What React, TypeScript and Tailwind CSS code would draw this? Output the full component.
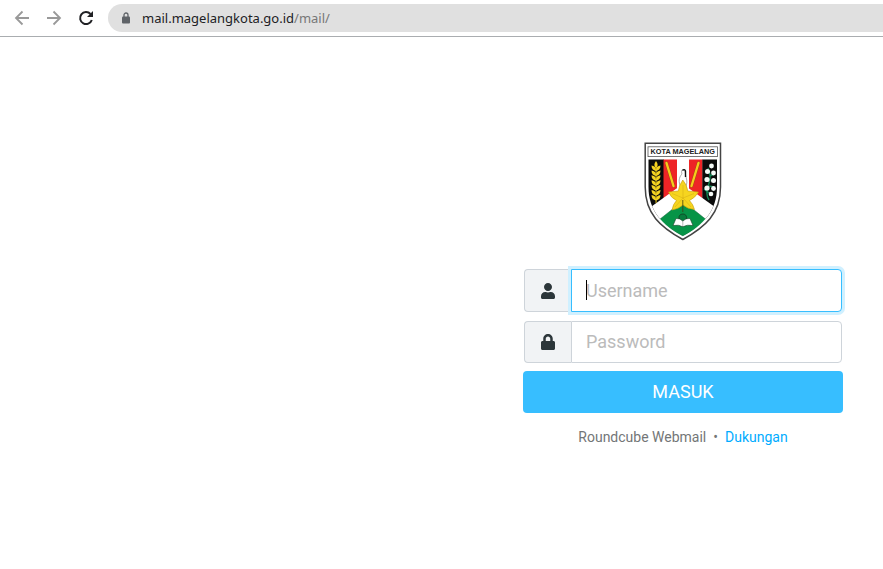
import React from "react";

const grains = [0, 1, 2, 3, 4, 5, 6];

function CityCrest() {
  return (
    <svg viewBox="0 0 78 99" className="h-[99px] w-[78px]" role="img" aria-label="Kota Magelang">
      <defs>
        <clipPath id="field">
          <path d="M4.5 17.5H73V45C73 69 59 83 38.8 94.5C18.5 83 4.5 69 4.5 45Z" />
        </clipPath>
      </defs>
      <path
        d="M1.2 1.2H76.5V45C76.5 72 61 85 38.8 97.5C16.5 85 1.2 72 1.2 45Z"
        fill="#fff"
        stroke="#444"
        strokeWidth="1.5"
      />
      <rect x="4" y="4.8" width="69.5" height="9.8" fill="#fff" stroke="#555" strokeWidth="0.8" />
      <text
        x="38.8"
        y="12.4"
        textAnchor="middle"
        fontSize="7.3"
        fontWeight="700"
        fill="#222"
        fontFamily="'Liberation Sans', Arial, sans-serif"
      >
        KOTA MAGELANG
      </text>
      <g clipPath="url(#field)">
        <rect x="4" y="17" width="16" height="60" fill="#0b0b0b" />
        <rect x="19.5" y="17" width="13.5" height="60" fill="#ee2426" />
        <rect x="33" y="17" width="12" height="60" fill="#fff" />
        <rect x="45" y="17" width="13.5" height="60" fill="#ee2426" />
        <rect x="58.3" y="17" width="16" height="60" fill="#0b0b0b" />
        <path d="M38.8 42L0 70V99H78V70Z" fill="#fff" />
        <path d="M38.8 59L15.5 77.5Q25 87.5 38.8 94Q53 87.5 62 77.5Z" fill="#079447" stroke="#16613a" strokeWidth="0.5" />
      </g>
      <g fill="#f4d321">
        {grains.map((i) => (
          <path
            key={i}
            d="M12 7C9 6.500 7.500 4.500 7.500 1.500C10 2 12 3 12 6C12 3 14 2 16.500 1.500C16.500 4.500 15 6.500 12 7Z"
            transform={`translate(0 ${22 + i * 4.9})`}
          />
        ))}
        <path d="M12 19C9.8 22 9.8 24 12 26C14.2 24 14.2 22 12 19Z" />
        <path d="M11.6 25H12.5V61H11.6Z" />
      </g>
      <g stroke="#8d4a12" strokeWidth="3" strokeLinecap="round">
        <path d="M22.5 21L29.500 44" />
        <path d="M54.5 21L47.500 44" />
      </g>
      <g stroke="#f6cb1c" strokeWidth="2.400" strokeLinecap="round">
        <path d="M22.5 21L29.500 44" />
        <path d="M54.5 21L47.500 44" />
      </g>
      <path d="M36 43C34 38 36 34 38 32C37 29 38 27 39.8 27.5C42 28.5 41 32 42 35C43.5 39 43 43 41 46H37Z" fill="#fff" stroke="#777" strokeWidth="0.6" />
      <path d="M38.5 28.5Q40.500 26.500 41.500 29V35" fill="none" stroke="#111" strokeWidth="1.4" />
      <path d="M64 26Q68 34 64.5 43T65 58M66 34L70 32M65 44L70 45M65 51L60 47M66 38L61 36" fill="none" stroke="#118653" strokeWidth="1.4" />
      <g fill="#f5faf7">
        <circle cx="67.500" cy="24" r="2.4" />
        <circle cx="63.5" cy="29.500" r="2.5" />
        <circle cx="69.500" cy="31" r="2.4" />
        <circle cx="63" cy="37.500" r="2.6" />
        <circle cx="69.5" cy="38.5" r="2.5" />
        <circle cx="63" cy="46" r="2.6" />
        <circle cx="69.5" cy="46.5" r="2.4" />
        <circle cx="67" cy="52" r="2.3" />
      </g>
      <path
        d="M38.8 38Q43 43 43.800 49L54.500 50Q51 56 45.500 58.500Q49 62 50.500 67.500Q43.500 67 39 63Q34.500 67 28 68Q29 62 32.500 58.500Q27 56 24.500 50L34.300 49Q35 43 38.8 38Z"
        fill="#f6d51f"
        stroke="#c39a12"
        strokeWidth="0.6"
        strokeLinejoin="round"
      />
      <path d="M39 56V43M39 56L50 51.500M39 56L47 65M39 56L31 65M39 56L28 51.500" stroke="#d3aa16" strokeWidth="0.5" />
      <path d="M38.8 58V70" stroke="#403d13" strokeWidth="0.8" />
      <path d="M35.5 78C34 74 36 72 39 72C42 72 43.5 75 42 78L39 80Z" fill="#087c3d" stroke="#123d22" strokeWidth="0.8" />
      <path
        d="M32 76.5Q36 76 38.8 79Q41.5 76 46 76.5L49 83.5Q43 82.5 39.5 84.5H38Q35 82.5 29 83.5Z"
        fill="#fff"
        stroke="#173f27"
        strokeWidth="0.6"
      />
      <path d="M38.8 79V84.5" stroke="#777" strokeWidth="0.5" />
    </svg>
  );
}

function UserIcon() {
  return (
    <svg viewBox="0 0 448 512" className="h-4 w-3.5" fill="currentColor" aria-hidden="true">
      <path d="M224 256c70.7 0 128-57.300 128-128S294.700 0 224 0 96 57.300 96 128s57.300 128 128 128zm89.600 32h-16.700c-22.200 10.200-46.900 16-72.900 16s-50.600-5.800-72.900-16h-16.700C60.200 288 0 348.200 0 422.400V464c0 26.500 21.500 48 48 48h352c26.500 0 48-21.500 48-48v-41.600c0-74.200-60.200-134.400-134.400-134.400z" />
    </svg>
  );
}

function LockIcon() {
  return (
    <svg viewBox="0 0 448 512" className="h-4 w-3.5" fill="currentColor" aria-hidden="true">
      <path d="M400 224h-24v-72C376 68.200 307.800 0 224 0S72 68.200 72 152v72H48c-26.500 0-48 21.500-48 48v192c0 26.500 21.500 48 48 48h352c26.500 0 48-21.500 48-48V272c0-26.500-21.500-48-48-48zm-104 0H152v-72c0-39.700 32.300-72 72-72s72 32.300 72 72v72z" />
    </svg>
  );
}

function BrowserBar() {
  return (
    <header className="flex h-[37px] items-center border-b border-[#aaadb0] bg-white pl-3.5">
      <nav className="flex gap-4" aria-label="Browser">
        <button type="button" aria-label="Back" className="text-[#999]">
          <svg viewBox="0 0 16 16" className="size-4" fill="none" stroke="currentColor" strokeWidth="1.800">
            <path d="M15 8H2M8.500 1.500L2 8l6.500 6.500" />
          </svg>
        </button>
        <button type="button" aria-label="Forward" className="text-[#999]">
          <svg viewBox="0 0 16 16" className="size-4" fill="none" stroke="currentColor" strokeWidth="1.800">
            <path d="M1 8h13M7.500 1.500L14 8l-6.500 6.500" />
          </svg>
        </button>
        <button type="button" aria-label="Reload" className="text-[#202124]">
          <svg viewBox="0 0 16 16" className="size-4" fill="none" stroke="currentColor" strokeWidth="2">
            <path d="M13.800 10A6 6 0 1 1 12.500 4" />
            <path d="M15 1v6H9z" fill="currentColor" stroke="none" />
          </svg>
        </button>
      </nav>
      <div className="ml-3.5 flex h-7 flex-1 items-center gap-3 rounded-l-full bg-[#e0e0e0] pl-3.5 text-[#5f6368]">
        <svg viewBox="0 0 8 12" className="h-3 w-2" aria-hidden="true">
          <path d="M2 5V3a2 2 0 0 1 4 0v2" fill="none" stroke="currentColor" strokeWidth="1.300" />
          <rect y="4.500" width="8" height="7" rx="1" fill="currentColor" />
        </svg>
        <p className="font-['Noto_Sans','Open_Sans',sans-serif] text-[13px] leading-5 text-[#202124]">
          mail.magelangkota.go.id<span className="text-[#777]">/mail/</span>
        </p>
      </div>
    </header>
  );
}

export default function App() {
  return (
    <div className="min-h-screen bg-white font-['Roboto',sans-serif]">
      <BrowserBar />
      <main className="flex justify-end px-10 pt-[105px]">
        <div className="flex w-full max-w-80 flex-col items-center">
          <CityCrest />
          <form className="mt-7 flex w-full flex-col" onSubmit={(e) => e.preventDefault()}>
            <div className="mx-px flex h-[43px]">
              <label
                htmlFor="username"
                aria-label="Username"
                className="flex w-[47px] items-center justify-center rounded-l border border-r-0 border-[#ced4da] bg-[#f1f3f5] text-[#2c363a]"
              >
                <UserIcon />
              </label>
              <div className="relative flex-1">
                <input
                  id="username"
                  type="text"
                  placeholder="Username"
                  className="h-full w-full rounded-r border border-[#37beff] bg-white px-3.5 text-lg text-[#2c363a] caret-transparent shadow-[0_0_0_3px_#d0f0ff] outline-none placeholder:text-[#bbb]"
                />
                <span className="pointer-events-none absolute top-[11px] left-[15px] h-5 w-px bg-black" />
              </div>
            </div>
            <div className="mx-px mt-[9px] flex h-[42px]">
              <label
                htmlFor="password"
                aria-label="Password"
                className="flex w-[47px] items-center justify-center rounded-l border border-r-0 border-[#ced4da] bg-[#f1f3f5] text-[#2c363a]"
              >
                <LockIcon />
              </label>
              <input
                id="password"
                type="password"
                placeholder="Password"
                className="min-w-0 flex-1 rounded-r border border-[#ced4da] bg-white px-3.5 text-lg text-[#2c363a] outline-none placeholder:text-[#bbb]"
              />
            </div>
            <button type="submit" className="mt-2 h-[42px] rounded bg-[#37beff] text-lg text-white">
              MASUK
            </button>
          </form>
          <footer className="mt-3.5 flex gap-[7px] text-sm leading-5 text-[#737677]">
            <span>Roundcube Webmail</span>
            <span>•</span>
            <a href="#support" className="text-[#00acff]">
              Dukungan
            </a>
          </footer>
        </div>
      </main>
    </div>
  );
}
